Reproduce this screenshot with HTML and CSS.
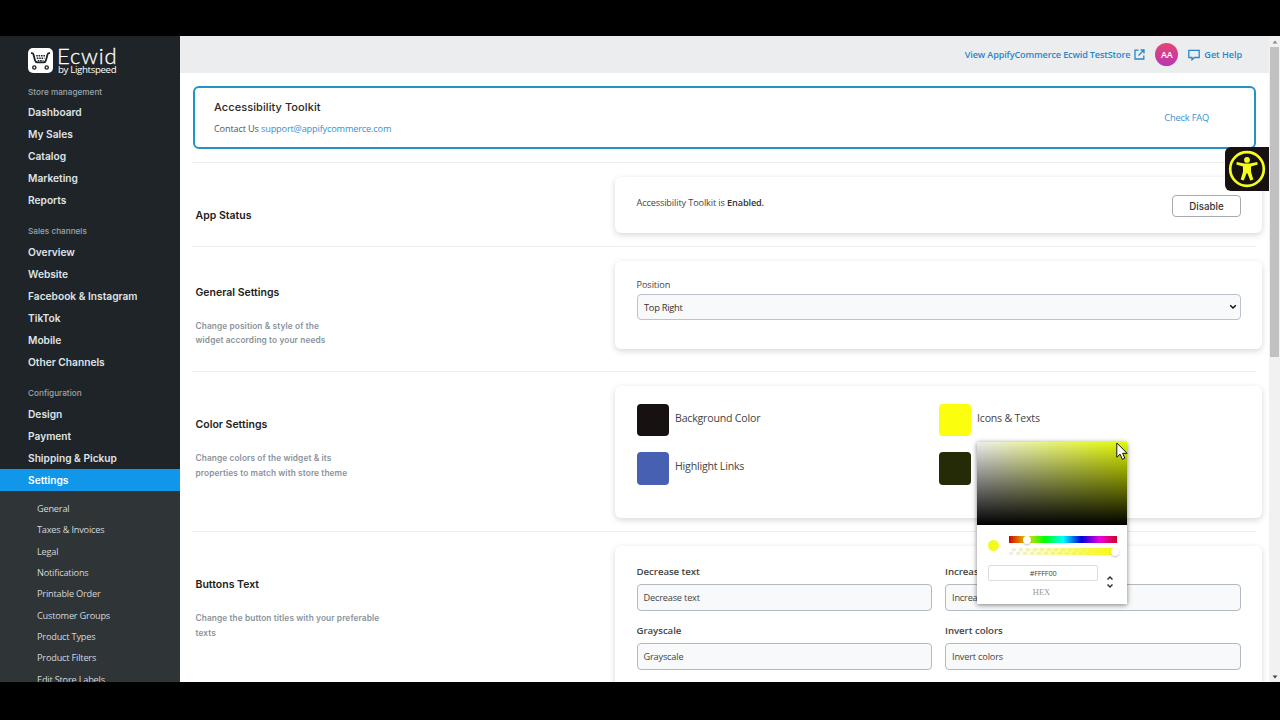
FILE: index.html
```html
<!DOCTYPE html>
<html lang="en">
<head>
<meta charset="utf-8">
<title>Accessibility Toolkit</title>
<link rel="stylesheet" href="styles.css">
</head>
<body>
<div class="screen">
  <nav class="sidebar">
    <div class="brand">
      <svg class="brand-mark" viewBox="0 0 25 25">
        <rect width="25" height="25" rx="5" fill="#fff"/>
        <path d="M3 5.200h1c.9 0 1.200.4 1.500 1.300l1.500 5.800c.4 1.500 1 2.100 2.400 2.100h6.200c1.400 0 2-.6 2.400-2.100l1.500-5.800c.3-.9.6-1.300 1.500-1.300h1" fill="none" stroke="#1f2428" stroke-width="1.800"/>
        <path d="M8.200 7.800h8.800M8.800 10.300h7.600M9.700 12.700h5.800" stroke="#1f2428" stroke-width="1.500" stroke-dasharray="1.600 .8"/>
        <circle cx="6.300" cy="19.500" r="1.600" fill="none" stroke="#1f2428" stroke-width="1.400"/>
        <circle cx="18.700" cy="19.500" r="1.600" fill="none" stroke="#1f2428" stroke-width="1.400"/>
      </svg>
      <div class="brand-text"><span class="brand-name">Ecwid</span><span class="brand-by">by Lightspeed</span></div>
    </div>
    <div class="group">Store management</div>
    <a class="item">Dashboard</a><a class="item">My Sales</a><a class="item">Catalog</a><a class="item">Marketing</a><a class="item">Reports</a>
    <div class="group spaced">Sales channels</div>
    <a class="item">Overview</a><a class="item">Website</a><a class="item">Facebook &amp; Instagram</a><a class="item">TikTok</a><a class="item">Mobile</a><a class="item">Other Channels</a>
    <div class="group spaced">Configuration</div>
    <a class="item">Design</a><a class="item">Payment</a><a class="item">Shipping &amp; Pickup</a><a class="item active">Settings</a>
    <div class="submenu">
      <a>General</a><a>Taxes &amp; Invoices</a><a>Legal</a><a>Notifications</a><a>Printable Order</a><a>Customer Groups</a><a>Product Types</a><a>Product Filters</a><a>Edit Store Labels</a>
    </div>
  </nav>

  <main class="main">
    <header class="topbar">
      <a class="store-link">View AppifyCommerce Ecwid TestStore</a>
      <svg class="ext" viewBox="0 0 11 11" fill="none" stroke="#2a86cc" stroke-width="1.300"><path d="M4.500 1.200H1v8.800h8.800V6.500M6.500 1h3.500v3.500M10 1L4.500 6.500"/></svg>
      <span class="avatar">AA</span>
      <svg class="chat" viewBox="0 0 12 12" fill="none" stroke="#2a86cc" stroke-width="1.300"><path d="M.8 1.300h10.400v7.200H6.600L4 10.800V8.500H.8z"/></svg>
      <a class="help">Get Help</a>
    </header>

    <div class="content">
      <section class="intro">
        <div>
          <h1>Accessibility Toolkit</h1>
          <p>Contact Us <a>support@appifycommerce.com</a></p>
        </div>
        <a class="faq">Check FAQ</a>
      </section>

      <section class="row status">
        <div class="about"><h2>App Status</h2></div>
        <div class="card">
          <p class="state">Accessibility Toolkit is <b>Enabled.</b></p>
          <button class="btn">Disable</button>
        </div>
      </section>

      <section class="row general">
        <div class="about"><h2>General Settings</h2><p>Change position &amp; style of the<br>widget according to your needs</p></div>
        <div class="card">
          <span class="label">Position</span>
          <div class="select"><span>Top Right</span><svg viewBox="0 0 8 6"><path d="M1.200 1.300L4 4l2.800-2.700" fill="none" stroke="#111" stroke-width="1.500"/></svg></div>
        </div>
      </section>

      <section class="row colors">
        <div class="about"><h2>Color Settings</h2><p>Change colors of the widget &amp; its<br>properties to match with store theme</p></div>
        <div class="card">
          <div class="color"><i class="swatch black"></i><span>Background Color</span></div>
          <div class="color"><i class="swatch yellow"></i><span>Icons &amp; Texts</span></div>
          <div class="color"><i class="swatch blue"></i><span>Highlight Links</span></div>
          <div class="color"><i class="swatch olive"></i></div>
        </div>
      </section>

      <section class="row buttons">
        <div class="about"><h2>Buttons Text</h2><p>Change the button titles with your preferable<br>texts</p></div>
        <div class="card">
          <div class="field"><span>Decrease text</span><div class="input">Decrease text</div></div>
          <div class="field"><span>Increase text</span><div class="input">Increase text</div></div>
          <div class="field"><span>Grayscale</span><div class="input">Grayscale</div></div>
          <div class="field"><span>Invert colors</span><div class="input">Invert colors</div></div>
        </div>
      </section>
    </div>
  </main>

  <div class="scrollbar">
    <svg viewBox="0 0 6 4"><path d="M3 0.500L5.500 3.500h-5z" fill="#8a8a8a"/></svg>
    <div class="thumb"></div>
    <svg class="down" viewBox="0 0 6 4"><path d="M3 3.500L5.500 .5h-5z" fill="#444"/></svg>
  </div>

  <div class="a11y">
    <svg viewBox="0 0 38 38">
      <circle cx="19" cy="19" r="16.800" fill="none" stroke="#f4ff1c" stroke-width="2.700"/>
      <circle cx="19" cy="9.900" r="2.900" fill="#f4ff1c"/>
      <path d="M8.800 12.100l7.300 1.500h5.800l7.300-1.500.5 2.500-6.700 1.900v5.200l2.300 7.800-3 1-2.900-7.300h-.8l-2.900 7.300-3-1 2.300-7.800v-5.200l-6.700-1.900z" fill="#f4ff1c"/>
    </svg>
  </div>

  <div class="picker">
    <div class="shade"></div>
    <div class="sliders">
      <i class="dot"></i>
      <div class="tracks">
        <div class="hue"><i class="knob"></i></div>
        <div class="alpha"><i class="knob"></i></div>
      </div>
    </div>
    <div class="format">
      <div class="value"><div class="hex">#FFFF00</div><span>HEX</span></div>
      <svg viewBox="0 0 8 14" fill="none" stroke="#333" stroke-width="1.500"><path d="M1.500 4.500L4 2l2.500 2.500M1.500 9.500L4 12l2.500-2.500"/></svg>
    </div>
  </div>

  <svg class="cursor" viewBox="0 0 12 19"><path d="M.8 1v14.300l3.300-3.100 2.200 5.100 2.500-1.100-2.200-4.900h4.500z" fill="#fff" stroke="#111" stroke-width="1"/></svg>
</div>
</body>
</html>
```
FILE: styles.css
```css
* { box-sizing: border-box; }
body { margin: 0; background: #000; height: 720px; padding: 36px 0 38px; overflow: hidden; font-family: "Open Sans", sans-serif; }
h1, h2, p { margin: 0; }
.screen { position: relative; display: flex; height: 646px; overflow: hidden; background: #fff; }

.sidebar { width: 180px; flex: none; background: #1f2428; font-family: Inter, sans-serif; overflow: hidden; }
.brand { display: flex; gap: 5px; height: 48px; padding: 12px 0 0 28px; }
.brand-mark { width: 25px; height: 25px; flex: none; }
.brand-text { display: flex; flex-direction: column; color: #fff; }
.brand-name { height: 16px; margin-left: -1px; font: 300 22px/16px Lato, sans-serif; letter-spacing: .8px; -webkit-text-stroke: .3px #fff; }
.brand-by { font: 9.700px/12px "Open Sans", sans-serif; letter-spacing: -.35px; }
.group { height: 17px; line-height: 17px; padding-left: 28px; font-size: 8.200px; font-weight: 500; color: #9aa4ad; }
.group.spaced { height: 30px; padding-top: 12px; }
.item { display: block; height: 22px; line-height: 23px; padding-left: 28px; font-size: 10.200px; font-weight: 600; color: #dfe3e6; }
.item.active { background: #1197e9; color: #fff; }
.submenu { background: #2f3437; height: 210px; padding-top: 7px; font-family: "Open Sans", sans-serif; }
.submenu a { display: block; height: 21.330px; line-height: 21px; padding-left: 37px; font-size: 9.200px; letter-spacing: -.2px; color: #d5d8da; }

.main { flex: 1; min-width: 0; }
.topbar { display: flex; align-items: center; justify-content: flex-end; height: 37px; padding-right: 27px; background: #ebedef; color: #2a86cc; font-size: 9.100px; font-weight: 600; }
.store-link { letter-spacing: -.14px; }
.ext { width: 11px; height: 11px; margin-left: 4px; }
.avatar { width: 23px; height: 23px; margin: 0 10px; border-radius: 50%; background: linear-gradient(#e54571, #b936b5); color: #fff; font-size: 9px; line-height: 23px; text-align: center; }
.chat { width: 12px; height: 12px; margin-right: 4px; }
.help { letter-spacing: -.05px; }

.content { padding: 13px 13px 0 12px; }
.intro { display: flex; justify-content: space-between; align-items: center; width: 1063px; height: 63px; margin-left: .5px; padding: 0 44.500px 0 19.500px; border: 2px solid #2492c3; border-radius: 6px; }
.intro h1 { margin-top: -1px; font: 500 11px/16px Inter, sans-serif; color: #292929; letter-spacing: .08px; }
.intro p { margin-top: 7px; font-size: 9.200px; line-height: 14px; letter-spacing: -.17px; color: #555; }
.intro p a { color: #3392cf; }
.faq { font-size: 9.300px; letter-spacing: -.2px; color: #3392cf; }

.row { display: flex; width: 1064px; border-top: 1px solid #ebedef; }
.about { width: 423px; flex: none; padding-left: 3.500px; font-family: Inter, sans-serif; }
.about h2 { padding-top: 45px; font-size: 10.500px; line-height: 16px; font-weight: 600; color: #222; }
.about p { margin-top: 18px; font-size: 8.300px; line-height: 14.600px; font-weight: 600; letter-spacing: .11px; color: #8a939d; }
.card { width: 647px; flex: none; margin-top: 14px; padding: 0 21px 0 21.500px; background: #fff; border-radius: 6px; box-shadow: 0 2px 6px rgba(0,0,0,.16); font-size: 9.200px; letter-spacing: -.18px; color: #444; }
.status { height: 84px; margin-top: 13px; }
.status .card { display: flex; justify-content: space-between; height: 56px; }
.state { padding-top: 19px; line-height: 14px; letter-spacing: -.14px; }
.state b { font-weight: 600; color: #333; }
.btn { width: 69px; height: 22px; margin-top: 18px; padding: 0; border: 1px solid #a6abb1; border-radius: 4px; background: #fff; color: #333; font: 500 9.700px Inter, sans-serif; }
.general { height: 125px; }
.general h2 { padding-top: 37.500px; }
.general .card { height: 88px; padding-top: 17px; }
.label { display: block; line-height: 14px; letter-spacing: -.1px; }
.select { display: flex; align-items: center; justify-content: space-between; height: 26px; margin-top: 2px; padding: 0 3px 0 6.500px; border: 1px solid #bcc2c9; border-radius: 4px; background: #f8f9fa; color: #333; }
.select span { letter-spacing: -.3px; font-size: 9.400px; }
.select svg { width: 8px; height: 6px; }
.colors { height: 160px; }
.colors .card { display: grid; grid-template-columns: 302px 302px; grid-template-rows: 32.500px 32.500px; row-gap: 16.300px; height: 132px; padding-top: 17.500px; }
.color { display: flex; gap: 6px; font-size: 10.600px; line-height: 29px; letter-spacing: -.2px; }
.swatch { width: 32.500px; height: 32.500px; border-radius: 4px; }
.black { background: #171112; }
.yellow { background: #fbff0d; }
.blue { background: #4860b2; }
.olive { background: #252b06; }
.buttons .card { display: grid; grid-template-columns: 295.500px 295.500px; column-gap: 13px; row-gap: 11px; height: 180px; padding-top: 18px; align-content: start; }
.field span { display: block; font-weight: 600; font-size: 9.700px; line-height: 16px; letter-spacing: -.07px; color: #444; }
.input { height: 27px; margin-top: 4px; margin-bottom: 1px; padding-left: 6px; border: 1px solid #b3b9c0; border-radius: 4px; background: #f8f9fa; line-height: 25px; }

.scrollbar { display: flex; flex-direction: column; align-items: center; width: 11px; flex: none; background: #f1f1f1; }
.scrollbar svg { width: 6px; height: 4px; margin: 4px 0 3px; }
.scrollbar .thumb { width: 9px; height: 310px; background: #c1c1c1; }
.scrollbar .down { margin-top: auto; }

.a11y { position: absolute; left: 1225px; top: 111px; width: 44px; height: 44px; padding: 3px 2px 3px 3px; border-radius: 6px 0 0 6px; background: #171112; }
.a11y svg { display: block; width: 38px; height: 38px; }

.picker { position: absolute; left: 977px; top: 406px; width: 150px; height: 162px; background: #fff; box-shadow: 0 1px 5px rgba(0,0,0,.5); }
.shade { height: 83px; background: linear-gradient(transparent, #000), linear-gradient(90deg, #eee, rgba(255,255,255,0)), #e1f800; }
.sliders { display: flex; align-items: center; height: 40px; padding: 0 10px 0 11px; gap: 10px; }
.dot { width: 11px; height: 11px; border-radius: 50%; background: #f5fa18; }
.tracks { display: flex; flex-direction: column; gap: 5px; width: 108px; }
.hue, .alpha { position: relative; height: 7px; }
.hue { background: linear-gradient(90deg, #d40000, #e8d800 17%, #0f0 33%, #0ff 50%, #00d 67%, #e0d 84%, #d00020); }
.alpha { background: linear-gradient(90deg, rgba(247,250,30,0), #f7fa1e 90%), repeating-conic-gradient(#eee 0 25%, #fff 0 50%) 0 0 / 7px 7px; }
.knob { position: absolute; left: 14px; top: 0; width: 8px; height: 8px; border-radius: 50%; background: #fff; box-shadow: 0 1px 2px rgba(0,0,0,.25); }
.alpha .knob { left: 102px; }
.format { display: flex; align-items: center; padding: 0 11px; gap: 8px; }
.value { width: 110px; text-align: center; color: #999; font: 8.500px/13px "Liberation Serif", serif; }
.value span { margin-right: 3px; }
.hex { height: 16px; margin-bottom: 5px; border: 1px solid #ddd; border-radius: 2px; color: #444; font: 7.300px/15px "Open Sans", sans-serif; letter-spacing: -.2px; }
.format svg { width: 8px; height: 14px; }
.cursor { position: absolute; left: 1116px; top: 405.500px; width: 12px; height: 19px; }
```
